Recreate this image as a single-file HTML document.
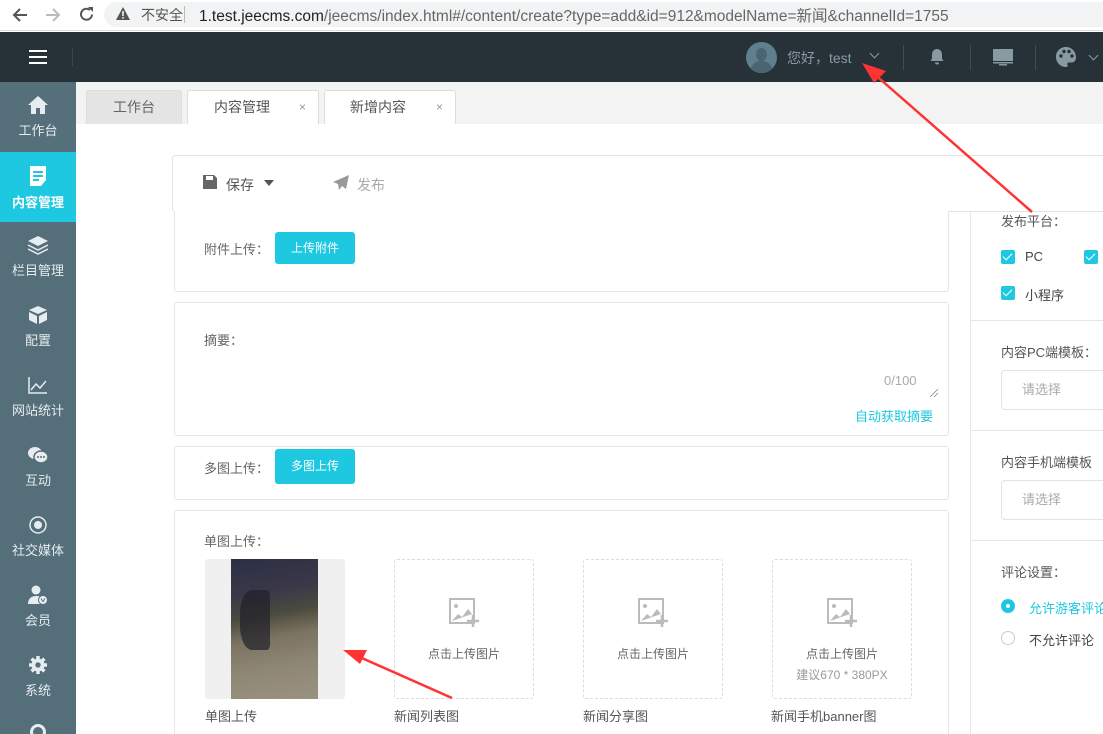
<!DOCTYPE html>
<html><head><meta charset="utf-8"><style>
*{box-sizing:border-box;margin:0;padding:0}
html,body{width:1103px;height:734px;overflow:hidden}
body{position:relative;background:#fff;font-family:"Liberation Sans","Noto Sans CJK SC",sans-serif;font-size:13px;color:#555}
.a{position:absolute;white-space:nowrap}
.side{left:0;top:82px;width:76px;height:652px;background:#546e7a}
.si{position:absolute;left:0;width:76px;height:70px;text-align:center;color:#e6ecef;font-size:13px;white-space:nowrap}
.si svg{display:block;margin:13px auto 5px}
.card{position:absolute;left:174px;width:775px;border:1px solid #e6e6e6;border-radius:3px;background:#fff}
.btn{position:absolute;background:#1ec8e1;color:#fff;border-radius:3px;width:80px;height:32px;line-height:32px;text-align:center;font-size:12px}
.lbl{position:absolute;color:#666;font-size:13px;white-space:nowrap}
.up{position:absolute;top:559px;width:140px;height:140px;border:1px dashed #dcdcdc;border-radius:3px;text-align:center;color:#666;font-size:12px}
.cap{position:absolute;top:706px;color:#555;font-size:13px;white-space:nowrap}
.chk{position:absolute;width:14px;height:14px;background:#1ec8e1;border-radius:2px}
.chk:after{content:"";position:absolute;left:4px;top:1px;width:4px;height:8px;border:solid #fff;border-width:0 1.5px 1.5px 0;transform:rotate(45deg)}
.sel{position:absolute;left:1001px;width:120px;height:40px;border:1px solid #e3e3e3;border-radius:4px;color:#aaa;line-height:38px;padding-left:20px}
.hr{position:absolute;left:971px;width:132px;height:1px;background:#e6e6e6}
</style></head><body>
<!-- browser bar -->
<div class="a" style="left:0;top:0;width:1103px;height:31px;background:#fff;border-bottom:1px solid #ddd"></div>
<div class="a" style="left:104px;top:2px;width:1010px;height:25px;background:#f1f3f4;border-radius:13px"></div>
<svg class="a" style="left:12px;top:7px" width="16" height="16"><path d="M15 8H2M8 2L2 8l6 6" stroke="#555" stroke-width="2" fill="none"/></svg>
<svg class="a" style="left:45px;top:7px" width="16" height="16"><path d="M1 8h13M8 2l6 6-6 6" stroke="#bbb" stroke-width="2" fill="none"/></svg>
<svg class="a" style="left:78px;top:6px" width="17" height="17"><path d="M14 8.5A5.5 5.5 0 1 1 12 4" stroke="#555" stroke-width="2" fill="none"/><path d="M10 1h5v5z" fill="#555"/></svg>
<svg class="a" style="left:116px;top:7px" width="14" height="13"><path d="M7 0l7 13H0z" fill="#555"/><rect x="6.2" y="4" width="1.6" height="5" fill="#f1f3f4"/><rect x="6.2" y="10" width="1.6" height="1.6" fill="#f1f3f4"/></svg>
<div class="a" style="left:141px;top:5px;font-size:14px;color:#555">不安全</div>
<div class="a" style="left:184px;top:6px;width:1px;height:17px;background:#bbb"></div>
<div class="a" style="left:199px;top:4px;font-size:15.5px;color:#222">1.test.jeecms.com<span style="color:#666">/jeecms/index.html#/content/create?type=add&amp;id=912&amp;modelName=新闻&amp;channelId=1755</span></div>
<!-- header -->
<div class="a" style="left:0;top:32px;width:1103px;height:50px;background:#263238"></div>
<div class="a" style="left:29px;top:50px;width:18px;height:2px;background:#fff;box-shadow:0 6px 0 #fff,0 12px 0 #fff"></div>
<div class="a" style="left:72px;top:48px;width:1px;height:18px;background:#37474f"></div>
<div class="a" style="left:746px;top:42px;width:31px;height:31px;border-radius:50%;background:#5f7f8f;overflow:hidden"><div style="position:absolute;left:10px;top:6px;width:11px;height:13px;border-radius:50%;background:#4a6571"></div><div style="position:absolute;left:5px;top:19px;width:21px;height:16px;border-radius:50%;background:#4a6571"></div></div>
<div class="a" style="left:787px;top:48px;color:#8a9aa3;font-size:14px">您好，test</div>
<div class="a" style="left:871px;top:50px;width:7px;height:7px;border:solid #8a9aa3;border-width:0 1px 1px 0;transform:rotate(45deg)"></div>
<div class="a" style="left:903px;top:45px;width:1px;height:25px;background:#3d4d55"></div>
<div class="a" style="left:970px;top:45px;width:1px;height:25px;background:#3d4d55"></div>
<div class="a" style="left:1035px;top:45px;width:1px;height:25px;background:#3d4d55"></div>
<svg class="a" style="left:929px;top:48px" width="16" height="18" viewBox="0 0 16 18"><path d="M8 1c-3 0-5 2.5-5 5.5v4L1.5 13h13L13 10.5v-4C13 3.5 11 1 8 1zM6 14.5a2 2 0 0 0 4 0z" fill="#8a9aa3"/></svg>
<svg class="a" style="left:992px;top:48px" width="22" height="18"><rect x="1" y="1" width="20" height="12" fill="#8a9aa3"/><rect x="1" y="14" width="20" height="1.5" fill="#8a9aa3"/><rect x="7" y="16" width="8" height="1.5" fill="#8a9aa3"/></svg>
<svg class="a" style="left:1055px;top:46px" width="22" height="22" viewBox="0 0 22 22"><path d="M11 1C5 1 1 5.5 1 11s4.5 10 10 10c1.5 0 2-1 1.5-2-.7-1.2 0-2.5 1.5-2.5h2.5c3 0 4.5-2.5 4.5-5C21 5.5 16.5 1 11 1z" fill="#8a9aa3"/><circle cx="6" cy="10" r="1.7" fill="#263238"/><circle cx="9" cy="5.5" r="1.7" fill="#263238"/><circle cx="14" cy="5.5" r="1.7" fill="#263238"/><circle cx="17" cy="10" r="1.7" fill="#263238"/></svg>
<div class="a" style="left:1090px;top:52px;width:7px;height:7px;border:solid #8a9aa3;border-width:0 1px 1px 0;transform:rotate(45deg)"></div>
<!-- sidebar -->
<div class="a side"></div>
<div class="si" style="top:82px;background:#556f7b"><svg width="22" height="20" viewBox="0 0 22 20"><path d="M11 1L1 10h3v9h5v-6h4v6h5v-9h3z" fill="#e6ecef"/></svg>工作台</div>
<div class="si" style="top:152px;background:#1ec8e1;color:#fff;font-weight:bold"><svg width="20" height="22" viewBox="0 0 20 22"><path d="M2 1h16v14l-5 6H2z" fill="#fff"/><rect x="5" y="6" width="10" height="2" fill="#1ec8e1"/><rect x="5" y="10" width="10" height="2" fill="#1ec8e1"/><rect x="5" y="14" width="6" height="2" fill="#1ec8e1"/></svg>内容管理</div>
<div class="si" style="top:222px"><svg width="22" height="20" viewBox="0 0 22 20"><path d="M11 1l10 5-10 5L1 6z" fill="#e6ecef"/><path d="M1 10l10 5 10-5M1 14l10 5 10-5" stroke="#e6ecef" stroke-width="1.5" fill="none"/></svg>栏目管理</div>
<div class="si" style="top:292px"><svg width="22" height="20" viewBox="0 0 22 20"><path d="M11 1l9 4-9 4-9-4z" fill="#e6ecef"/><path d="M2 7l8 4v8l-8-4zM20 7l-8 4v8l8-4z" fill="#e6ecef"/></svg>配置</div>
<div class="si" style="top:362px"><svg width="22" height="20" viewBox="0 0 22 20"><path d="M2 2v16h18M4 15l5-6 4 4 6-7" stroke="#e6ecef" stroke-width="1.5" fill="none"/></svg>网站统计</div>
<div class="si" style="top:432px"><svg width="22" height="20" viewBox="0 0 22 20"><ellipse cx="8" cy="8" rx="7" ry="6" fill="#e6ecef"/><ellipse cx="14" cy="12" rx="7" ry="6" fill="#e6ecef" stroke="#546e7a" stroke-width="1.5"/><circle cx="11" cy="12" r="1" fill="#546e7a"/><circle cx="14" cy="12" r="1" fill="#546e7a"/><circle cx="17" cy="12" r="1" fill="#546e7a"/></svg>互动</div>
<div class="si" style="top:502px"><svg width="22" height="20" viewBox="0 0 22 20"><circle cx="11" cy="10" r="8" stroke="#e6ecef" stroke-width="1.5" fill="none"/><circle cx="11" cy="10" r="4" fill="#e6ecef"/></svg>社交媒体</div>
<div class="si" style="top:572px"><svg width="22" height="20" viewBox="0 0 22 20"><circle cx="9" cy="5" r="4.5" fill="#e6ecef"/><path d="M1 19c0-6 4-8 8-8s5 1 5 2v6z" fill="#e6ecef"/><circle cx="16" cy="15" r="4.5" fill="#e6ecef" stroke="#546e7a" stroke-width="1"/><path d="M14 13.5l2 3 2-3" stroke="#546e7a" fill="none"/></svg>会员</div>
<div class="si" style="top:642px"><svg width="22" height="20" viewBox="0 0 22 20"><circle cx="11" cy="10" r="6.5" fill="#e6ecef"/><g stroke="#e6ecef" stroke-width="3.5"><path d="M11 1v18M2 10h18M4.6 3.6l12.8 12.8M17.4 3.6L4.6 16.4"/></g><circle cx="11" cy="10" r="2.7" fill="#546e7a"/></svg>系统</div>
<div class="a" style="left:30px;top:724px;width:16px;height:16px;border-radius:50%;border:3px solid #e6ecef"></div>
<!-- tabs -->
<div class="a" style="left:76px;top:82px;width:1027px;height:42px;background:#f3f3f3"></div>
<div class="a" style="left:86px;top:90px;width:96px;height:34px;background:#e5e5e5;border:1px solid #ddd;border-bottom:none;border-radius:3px 3px 0 0;text-align:center;line-height:33px;color:#666;font-size:14px">工作台</div>
<div class="a" style="left:187px;top:90px;width:132px;height:34px;background:#fff;border:1px solid #ddd;border-bottom:none;border-radius:3px 3px 0 0;color:#555;font-size:14px;line-height:33px;padding-left:26px">内容管理<span style="position:absolute;left:111px;color:#999;font-size:12px">×</span></div>
<div class="a" style="left:324px;top:90px;width:132px;height:34px;background:#fff;border:1px solid #ddd;border-bottom:none;border-radius:3px 3px 0 0;color:#555;font-size:14px;line-height:33px;padding-left:25px">新增内容<span style="position:absolute;left:111px;color:#999;font-size:12px">×</span></div>
<!-- toolbar -->
<div class="a" style="left:172px;top:155px;width:940px;height:57px;border:1px solid #e3e3e3;border-radius:3px;background:#fff"></div>
<svg class="a" style="left:203px;top:175px" width="14" height="14"><path d="M0 0h11l3 3v11H0z" fill="#666"/><rect x="3" y="1" width="7" height="4" fill="#fff"/></svg>
<div class="a" style="left:226px;top:175px;color:#555;font-size:14px">保存</div>
<div class="a" style="left:264px;top:180px;width:0;height:0;border:5px solid transparent;border-top:6px solid #555"></div>
<svg class="a" style="left:333px;top:175px" width="17" height="16" viewBox="0 0 17 16"><path d="M16 0L0 7l5 2 1 6 3-4 4 3z" fill="#999"/></svg>
<div class="a" style="left:357px;top:175px;color:#aaa;font-size:14px">发布</div>
<!-- cards -->
<div class="card" style="top:211px;height:81px;border-top:none;border-radius:0 0 3px 3px"></div>
<div class="lbl" style="left:204px;top:239px">附件上传：</div>
<div class="btn" style="left:275px;top:232px">上传附件</div>
<div class="card" style="top:302px;height:134px"></div>
<div class="lbl" style="left:204px;top:330px">摘要：</div>
<div class="a" style="left:884px;top:373px;color:#aaa;font-size:13px">0/100</div>
<div class="a" style="left:930px;top:389px;width:8px;height:8px;background:linear-gradient(135deg,transparent 45%,#666 50%,transparent 55%,transparent 70%,#666 75%,transparent 80%)"></div>
<div class="a" style="left:855px;top:406px;color:#1ec8e1;font-size:13px">自动获取摘要</div>
<div class="card" style="top:446px;height:54px"></div>
<div class="lbl" style="left:204px;top:458px">多图上传：</div>
<div class="btn" style="left:275px;top:449px;height:35px;line-height:35px">多图上传</div>
<div class="card" style="top:510px;height:230px"></div>
<div class="lbl" style="left:204px;top:531px">单图上传：</div>
<div class="a" style="left:205px;top:559px;width:140px;height:140px;background:#f0f0f0;border-radius:3px"></div>
<div class="a" style="left:231px;top:559px;width:87px;height:140px;background:linear-gradient(170deg,#2c2f45 0%,#3a3848 25%,#4b4a3e 40%,#7b7360 55%,#8f8775 75%,#9a917f 100%)"></div>
<div class="a" style="left:240px;top:590px;width:30px;height:60px;background:#1f1f2a;border-radius:40% 10% 10% 40%;opacity:.7"></div>
<div class="cap" style="left:205px">单图上传</div>
<div class="up" style="left:394px"><svg style="margin-top:38px" width="30" height="30" viewBox="0 0 30 30"><rect x="1" y="1" width="24" height="24" fill="none" stroke="#bbb" stroke-width="2"/><circle cx="7" cy="8" r="2" fill="#bbb"/><path d="M3 23l6-7 4 3 6-8 4 5" fill="#bbb"/><path d="M24 17v12M18 23h12" stroke="#bbb" stroke-width="2.5"/></svg><div style="margin-top:14px">点击上传图片</div></div>
<div class="cap" style="left:394px">新闻列表图</div>
<div class="up" style="left:583px"><svg style="margin-top:38px" width="30" height="30" viewBox="0 0 30 30"><rect x="1" y="1" width="24" height="24" fill="none" stroke="#bbb" stroke-width="2"/><circle cx="7" cy="8" r="2" fill="#bbb"/><path d="M3 23l6-7 4 3 6-8 4 5" fill="#bbb"/><path d="M24 17v12M18 23h12" stroke="#bbb" stroke-width="2.5"/></svg><div style="margin-top:14px">点击上传图片</div></div>
<div class="cap" style="left:583px">新闻分享图</div>
<div class="up" style="left:772px"><svg style="margin-top:38px" width="30" height="30" viewBox="0 0 30 30"><rect x="1" y="1" width="24" height="24" fill="none" stroke="#bbb" stroke-width="2"/><circle cx="7" cy="8" r="2" fill="#bbb"/><path d="M3 23l6-7 4 3 6-8 4 5" fill="#bbb"/><path d="M24 17v12M18 23h12" stroke="#bbb" stroke-width="2.5"/></svg><div style="margin-top:14px">点击上传图片</div><div style="margin-top:4px;color:#999">建议670 * 380PX</div></div>
<div class="cap" style="left:771px">新闻手机banner图</div>
<!-- right panel -->
<div class="a" style="left:970px;top:211px;width:1px;height:523px;background:#e6e6e6"></div>
<div class="lbl" style="left:1001px;top:211px;color:#555">发布平台：</div>
<div class="chk" style="left:1001px;top:250px"></div><div class="lbl" style="left:1025px;top:249px;color:#444">PC</div>
<div class="chk" style="left:1084px;top:250px"></div>
<div class="chk" style="left:1001px;top:286px"></div><div class="lbl" style="left:1025px;top:285px;color:#444">小程序</div>
<div class="hr" style="top:320px"></div>
<div class="lbl" style="left:1001px;top:342px;color:#555">内容PC端模板：</div>
<div class="sel" style="top:370px">请选择</div>
<div class="hr" style="top:430px"></div>
<div class="lbl" style="left:1001px;top:452px;color:#555">内容手机端模板</div>
<div class="sel" style="top:480px">请选择</div>
<div class="hr" style="top:540px"></div>
<div class="lbl" style="left:1001px;top:562px;color:#555">评论设置：</div>
<div class="a" style="left:1001px;top:599px;width:14px;height:14px;border-radius:50%;background:#1ec8e1"><div style="position:absolute;left:5px;top:5px;width:4px;height:4px;border-radius:50%;background:#fff"></div></div>
<div class="lbl" style="left:1029px;top:598px;color:#1ec8e1">允许游客评论</div>
<div class="a" style="left:1001px;top:631px;width:14px;height:14px;border-radius:50%;border:1px solid #ccc"></div>
<div class="lbl" style="left:1029px;top:630px;color:#444">不允许评论</div>
<!-- arrows -->
<svg class="a" style="left:0;top:0" width="1103" height="734">
<path d="M1032 212L872 72" stroke="#f33" stroke-width="2.5"/>
<path d="M862 63l24 8-12 12z" fill="#f33"/>
<path d="M452 698L355 655" stroke="#f33" stroke-width="2.5"/>
<path d="M343 650l24 0-7 14z" fill="#f33"/>
</svg>
</body></html>
